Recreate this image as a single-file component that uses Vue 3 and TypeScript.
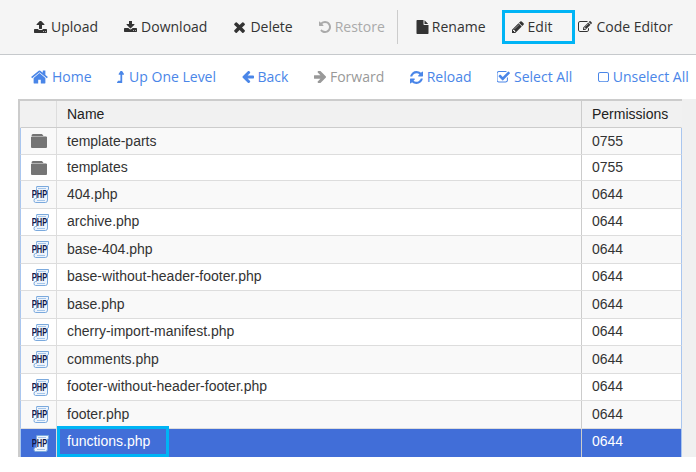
<script setup lang="ts">
interface Act { label: string; d: string; vb: string; w: number; h: number; gap: number; muted?: boolean; mark?: boolean; stretch?: boolean }
const P = {
  upload: 'M1344 1472q0-26-19-45t-45-19-45 19-19 45 19 45 45 19 45-19 19-45zm256 0q0-26-19-45t-45-19-45 19-19 45 19 45 45 19 45-19 19-45zm128-224v320q0 40-28 68t-68 28h-1472q-40 0-68-28t-28-68v-320q0-40 28-68t68-28h427q21 56 70.500 92t110.500 36h256q61 0 110.500-36t70.500-92h427q40 0 68 28t28 68zm-325-648q-17 40-59 40h-256v448q0 26-19 45t-45 19h-256q-26 0-45-19t-19-45v-448h-256q-42 0-59-40-17-39 14-69l448-448q18-19 45-19t45 19l448 448q31 30 14 69z',
  download: 'M1344 1344q0-26-19-45t-45-19-45 19-19 45 19 45 45 19 45-19 19-45zm256 0q0-26-19-45t-45-19-45 19-19 45 19 45 45 19 45-19 19-45zm128-224v320q0 40-28 68t-68 28h-1472q-40 0-68-28t-28-68v-320q0-40 28-68t68-28h465l135 136q58 56 136 56t136-56l136-136h464q40 0 68 28t28 68zm-325-569q17 41-14 70l-448 448q-18 19-45 19t-45-19l-448-448q-31-29-14-70 17-39 59-39h256v-448q0-26 19-45t45-19h256q26 0 45 19t19 45v448h256q42 0 59 39z',
  times: 'M1490 1322q0 40-28 68l-136 136q-28 28-68 28t-68-28l-294-294-294 294q-28 28-68 28t-68-28l-136-136q-28-28-28-68t28-68l294-294-294-294q-28-28-28-68t28-68l136-136q28-28 68-28t68 28l294 294 294-294q28-28 68-28t68 28l136 136q28 28 28 68t-28 68l-294 294 294 294q28 28 28 68z',
  undo: 'M1664 896q0 156-61 298t-164 245-245 164-298 61q-172 0-327-72.500t-264-204.500q-7-10-6.500-22.500t8.500-20.500l137-138q10-9 25-9 16 2 23 12 73 95 179 147t225 52q104 0 198.500-40.500t163.500-109.500 109.500-163.500 40.500-198.500-40.500-198.500-109.500-163.500-163.500-109.500-198.500-40.500q-98 0-188 35.500t-160 101.500l137 138q31 30 14 69-17 40-59 40h-448q-26 0-45-19t-19-45v-448q0-42 40-59 39-17 69 14l130 129q107-101 244.500-156.500t284.500-55.500q156 0 298 61t245 164 164 245 61 298z',
  file: 'M1152 512v-472q22 14 36 28l408 408q14 14 28 36h-472zm-128 32q0 40 28 68t68 28h544v1056q0 40-28 68t-68 28h-1344q-40 0-68-28t-28-68v-1600q0-40 28-68t68-28h800v544z',
  pencil: 'M491 1536l91-91-235-235-91 91v107h128v128h107zm523-928q0-22-22-22-10 0-17 7l-542 542q-7 7-7 17 0 22 22 22 10 0 17-7l542-542q7-7 7-17zm-54-192l416 416-832 832h-416v-416zm683 96q0 53-37 90l-166 166-416-416 166-165q36-38 90-38 53 0 91 38l235 234q37 39 37 91z',
  edit: 'M888 1184l116-116-152-152-116 116v56h96v96h56zm440-720q-16-16-33 1l-350 350q-17 17-1 33t33-1l350-350q17-17 1-33zm80 594v190q0 119-84.500 203.500t-203.500 84.500h-832q-119 0-203.500-84.500t-84.500-203.500v-832q0-119 84.500-203.500t203.500-84.500h832q63 0 117 25 15 7 18 23 3 17-9 29l-49 49q-14 14-32 8-23-6-45-6h-832q-66 0-113 47t-47 113v832q0 66 47 113t113 47h832q66 0 113-47t47-113v-126q0-13 9-22l64-64q15-15 35-7t20 29zm-96-738l288 288-672 672h-288v-288zm444 132l-92 92-288-288 92-92q28-28 68-28t68 28l152 152q28 28 28 68t-28 68z',
  home: 'M1472 992v480q0 26-19 45t-45 19h-384v-384h-256v384h-384q-26 0-45-19t-19-45v-480q0-1 .5-3t.5-3l575-474 575 474q1 2 1 6zm223-69l-62 74q-8 9-21 11h-3q-13 0-21-7l-692-577-692 577q-12 8-24 7-13-2-21-11l-62-74q-8-10-7-23.500t11-21.500l719-599q32-26 76-26t76 26l244 204v-195q0-14 9-23t23-9h192q14 0 23 9t9 23v408l219 182q10 8 11 21.500t-7 23.500z',
  up: 'M1395 508q-17 36-58 36h-192v864q0 14-9 23t-23 9h-704q-21 0-29-18-8-20 4-35l160-192q9-11 25-11h320v-640h-192q-40 0-58-37-17-37 9-68l320-384q18-22 49-22t49 22l320 384q27 32 9 69z',
  left: 'M1664 896v128q0 53-32.500 89.500t-84.500 36.500h-704l293 294q38 36 38 90t-38 90l-75 76q-37 37-90 37-52 0-91-37l-651-652q-37-37-37-90 0-54 37-91l651-650q38-38 91-38 52 0 90 38l75 74q38 38 38 91t-38 91l-293 293h704q52 0 84.500 37.500t32.500 90.500z',
  right: 'M1600 960q0 54-37 91l-651 651q-39 37-91 37-51 0-90-37l-75-75q-38-38-38-91t38-91l293-293h-704q-52 0-84.500-37.500t-32.500-90.500v-128q0-53 32.500-90.500t84.500-37.500h704l-293-294q-38-36-38-90t38-90l75-75q38-38 90-38 53 0 91 38l651 651q37 35 37 90z',
  refresh: 'M1639 1056q0 5-1 7-64 268-268 434.500t-478 166.500q-146 0-282.500-55t-243.500-157l-129 129q-19 19-45 19t-45-19-19-45v-448q0-26 19-45t45-19h448q26 0 45 19t19 45-19 45l-137 137q71 66 161 102t187 36q134 0 250-65t186-179q11-17 53-117 8-23 30-23h192q13 0 22.500 9.500t9.500 22.500zm25-800v448q0 26-19 45t-45 19h-448q-26 0-45-19t-19-45 19-45l138-138q-148-137-349-137-134 0-250 65t-186 179q-11 17-53 117-8 23-30 23h-199q-13 0-22.500-9.500t-9.500-22.500v-7q65-268 270-434.500t480-166.500q146 0 284 55.500t245 156.500l130-129q19-19 45-19t45 19 19 45z',
  check: 'M1472 930v318q0 119-84.500 203.500t-203.500 84.500h-832q-119 0-203.500-84.500t-84.500-203.500v-832q0-119 84.500-203.500t203.500-84.500h832q63 0 117 25 15 7 18 23 3 17-9 29l-49 49q-10 10-23 10-3 0-9-2-23-6-45-6h-832q-66 0-113 47t-47 113v832q0 66 47 113t113 47h832q66 0 113-47t47-113v-254q0-13 9-22l64-64q10-10 23-10 6 0 12 3 20 8 20 29zm231-489l-814 814q-24 24-57 24t-57-24l-430-430q-24-24-24-57t24-57l110-110q24-24 57-24t57 24l263 263 647-647q24-24 57-24t57 24l110 110q24 24 24 57t-24 57z',
  square: 'M1120 256h-832q-66 0-113 47t-47 113v832q0 66 47 113t113 47h832q66 0 113-47t47-113v-832q0-66-47-113t-113-47zm288 160v832q0 119-84.500 203.500t-203.500 84.500h-832q-119 0-203.500-84.500t-84.500-203.500v-832q0-119 84.500-203.500t203.500-84.500h832q119 0 203.500 84.500t84.500 203.500z'
}
const tools: Act[] = [
  { label: 'Upload', d: P.upload, vb: '64 128 1664 1536', w: 13, h: 12, gap: 4 },
  { label: 'Download', d: P.download, vb: '64 128 1664 1536', w: 13, h: 12, gap: 4 },
  { label: 'Delete', d: P.times, vb: '182 238 1308 1316', w: 12, h: 12, gap: 5 },
  { label: 'Restore', d: P.undo, vb: '128 128 1536 1536', w: 12, h: 12, gap: 4, muted: true }
]
const tools2: Act[] = [
  { label: 'Rename', d: P.file, vb: '128 0 1536 1792', w: 13, h: 14, gap: 3 },
  { label: 'Edit', d: P.pencil, vb: '128 128 1536 1536', w: 12, h: 12, gap: 4, mark: true },
  { label: 'Code Editor', d: P.edit, vb: '0 0 1792 1792', w: 14, h: 14, gap: 4 }
]
const nav: Act[] = [
  { label: 'Home', d: P.home, vb: '64 250 1664 1290', w: 17, h: 14, gap: 4 },
  { label: 'Up One Level', d: P.up, vb: '395 128 1010 1312', w: 7, h: 12, gap: 5, stretch: true },
  { label: 'Back', d: P.left, vb: '128 270 1536 1380', w: 12, h: 12, gap: 4 },
  { label: 'Forward', d: P.right, vb: '192 270 1408 1380', w: 12, h: 12, gap: 4, muted: true },
  { label: 'Reload', d: P.refresh, vb: '128 128 1536 1536', w: 13, h: 13, gap: 4 },
  { label: 'Select All', d: P.check, vb: '128 128 1600 1408', w: 13, h: 11.5, gap: 4 },
  { label: 'Unselect All', d: P.square, vb: '0 128 1408 1536', w: 11, h: 11, gap: 4, stretch: true }
]
interface Row { name: string; perm: string; h: number; folder?: boolean; sel?: boolean }
const names = ['404.php','archive.php','base-404.php','base-without-header-footer.php','base.php','cherry-import-manifest.php','comments.php','footer-without-header-footer.php','footer.php']
const rows: Row[] = [
  { name: 'template-parts', perm: '0755', folder: true, h: 27 },
  { name: 'templates', perm: '0755', folder: true, h: 26 },
  ...names.map((name, i) => ({ name, perm: '0644', h: i % 2 === 0 ? 28 : 27 })),
  { name: 'functions.php', perm: '0644', sel: true, h: 28 }
]
const iconBox = (a: Act) => ({ width: a.w + 'px', height: a.h + 'px', marginRight: a.gap + 'px' })
const ratio = (a: Act) => (a.stretch ? 'none' : 'xMidYMid meet')
</script>

<template>
  <div class="page">
    <div class="toolbar">
      <a v-for="t in tools" :key="t.label" class="btn" :class="{ muted: t.muted }">
        <svg class="ic" :style="iconBox(t)" :viewBox="t.vb" :preserveAspectRatio="ratio(t)"><path :d="t.d" /></svg>{{ t.label }}
      </a>
      <span class="sep"></span>
      <a v-for="t in tools2" :key="t.label" class="btn" :class="{ marked: t.mark }">
        <svg class="ic" :style="iconBox(t)" :viewBox="t.vb" :preserveAspectRatio="ratio(t)"><path :d="t.d" /></svg>{{ t.label }}
        <span v-if="t.mark" class="edit-box"></span>
      </a>
    </div>
    <div class="navbar">
      <a v-for="n in nav" :key="n.label" class="btn link" :class="{ muted: n.muted }">
        <svg class="ic" :style="iconBox(n)" :viewBox="n.vb" :preserveAspectRatio="ratio(n)"><path :d="n.d" /></svg>{{ n.label }}
      </a>
    </div>
    <div class="listing">
      <div class="table">
        <div class="row head">
          <div class="cell c-icon"></div>
          <div class="cell c-name">Name</div>
          <div class="cell c-perm">Permissions</div>
        </div>
        <div
          v-for="(r, i) in rows"
          :key="r.name"
          class="row"
          :class="{ odd: i % 2 === 0, sel: r.sel, lift: i > 0 }"
          :style="{ height: r.h + 'px' }"
        >
          <div class="cell c-icon">
            <svg v-if="r.folder" class="folder" viewBox="0 0 16 14">
              <path d="M2 0h9l1.500 2H.5q0-2 1.500-2z" />
              <path d="M0 3h16v10q0 1-1 1H1q-1 0-1-1z" />
              <path d="M.5 2h15v1H.5z" opacity=".55" />
            </svg>
            <svg v-else class="php" viewBox="0 0 18 17">
              <path d="M5 .5h11.500v3l-1 .5v10q0 2.500-2 2.500h-10q-1.500 0-1.500-2t1.500-2h1v-10q0-2.500 1-2.500z" fill="#eef4fc" stroke="#7aa9dd" />
              <path d="M6 2.500h8M5 14.500h8" stroke="#a5c6ea" />
              <text transform="translate(7.500 12) scale(.68 1)" text-anchor="middle" class="php-text">PHP</text>
            </svg>
          </div>
          <div class="cell c-name">
            {{ r.name }}
            <span v-if="r.sel" class="name-box"></span>
          </div>
          <div class="cell c-perm">{{ r.perm }}</div>
        </div>
      </div>
      <div class="gutter"></div>
    </div>
  </div>
</template>

<style>
html, body { margin: 0; background: #fff; }
</style>

<style scoped>
.page { width: 696px; height: 472px; overflow: hidden; background: #fff; }
.toolbar {
  height: 54px;
  display: flex;
  align-items: center;
  padding-left: 21px;
  background: #f5f5f5;
  border-bottom: 1px solid #c6c9cc;
}
.toolbar .btn { padding: 0 13px; }
.navbar {
  height: 44px;
  display: flex;
  align-items: center;
  padding-left: 18.25px;
}
.navbar .btn { padding: 0 12.75px; }
.btn {
  position: relative;
  display: flex;
  align-items: center;
  font: 14px/20px "Open Sans", sans-serif;
  color: #333;
  white-space: nowrap;
}
.btn .ic { fill: currentColor; flex: none; }
.btn.muted { color: #aaa; }
.link { color: #4a86e8; }
.link.muted { color: #999; }
.sep { width: 1px; height: 34px; margin: 0 5px 0 -1px; background: #ccc; }
.edit-box {
  position: absolute;
  left: 3.5px;
  top: -7px;
  width: 67px;
  height: 28px;
  border: 3px solid #00b4f5;
}
.listing { display: flex; height: 358px; }
.table {
  width: 664px;
  margin-left: 18px;
  box-sizing: border-box;
  border-top: 2px solid #ccc;
  border-left: 2px solid #ccc;
}
.row {
  display: flex;
  align-items: stretch;
  box-sizing: border-box;
  border-bottom: 1px solid #ddd;
  font: 14px/20px "Liberation Sans", Arial, sans-serif;
  color: #333;
  background: #fff;
  border-left: 1px solid #a9c6ef;
  border-right: 1px solid #a9c6ef;
}
.row.odd { background: #f9f9f9; }
.row.head {
  height: 27px;
  background: #f1f1f1;
  color: #222;
  border-left-color: #f1f1f1;
  border-right-color: #f1f1f1;
  border-bottom-color: #ccc;
}
.row.sel { background: #416ed8; color: #fff; border-bottom: 0; }
.row.lift .c-name, .row.lift .c-perm { padding-bottom: 2px; }
.row.sel .c-name, .row.sel .c-perm { padding-bottom: 4px; }
.cell { position: relative; box-sizing: border-box; display: flex; align-items: center; }
.c-icon { width: 35px; justify-content: center; }
.c-name { flex: 1; padding-left: 10px; border-left: 1px solid #ddd; }
.c-perm { width: 100px; padding-left: 10px; border-left: 1px solid #ccc; }
.folder { width: 16px; height: 14px; fill: #757575; }
.php { width: 18px; height: 17px; margin-left: 5px; flex: none; }
.php-text {
  font: bold 11px "Liberation Sans", sans-serif;
  fill: #10184a;
}
.name-box {
  position: absolute;
  left: 0;
  top: -3px;
  width: 112px;
  height: 31px;
  box-sizing: border-box;
  border: 3px solid #00b4f5;
}
.gutter { flex: 1; background: #f0f0f0; }
</style>
